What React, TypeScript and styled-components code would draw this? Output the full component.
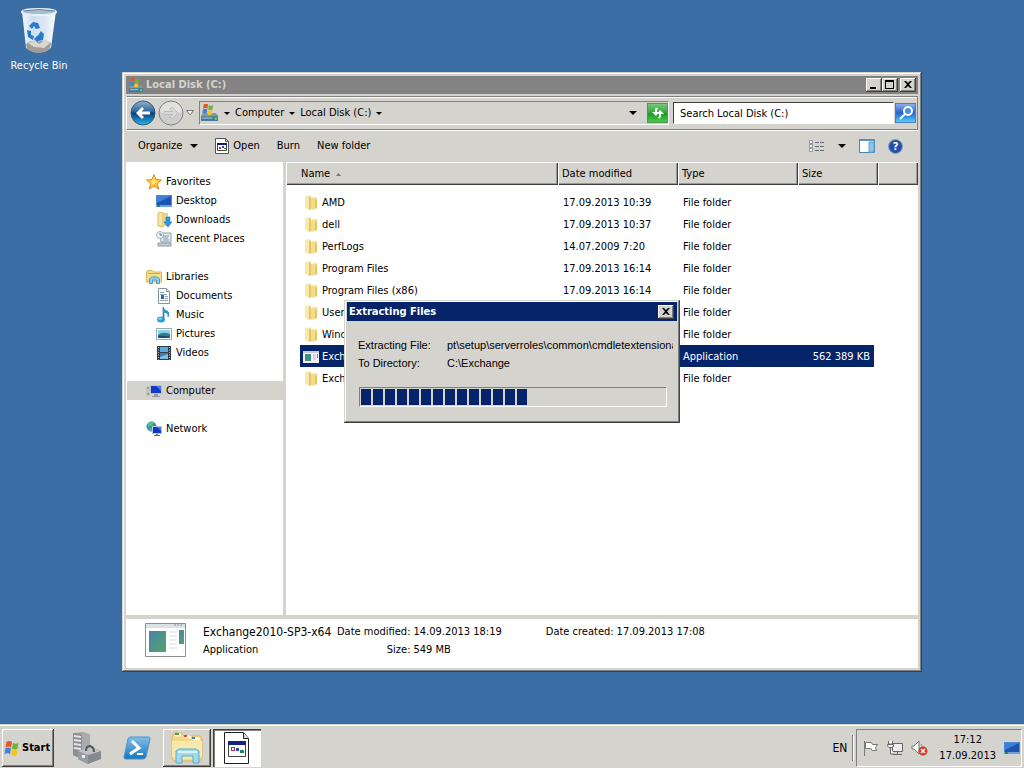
import { ReactNode } from "react";
import styled, { createGlobalStyle, css } from "styled-components";

const face = "#d5d3ce";
const navy = "#06246a";

type IconName =
  | "star"
  | "desktop"
  | "downloads"
  | "recent"
  | "libraries"
  | "document"
  | "music"
  | "pictures"
  | "videos"
  | "computer"
  | "network"
  | "folder"
  | "app";

const favorites: { label: string; icon: IconName }[] = [
  { label: "Desktop", icon: "desktop" },
  { label: "Downloads", icon: "downloads" },
  { label: "Recent Places", icon: "recent" },
];

const libraries: { label: string; icon: IconName }[] = [
  { label: "Documents", icon: "document" },
  { label: "Music", icon: "music" },
  { label: "Pictures", icon: "pictures" },
  { label: "Videos", icon: "videos" },
];

const files = [
  { name: "AMD", date: "17.09.2013 10:39", type: "File folder", size: "" },
  { name: "dell", date: "17.09.2013 10:37", type: "File folder", size: "" },
  { name: "PerfLogs", date: "14.07.2009 7:20", type: "File folder", size: "" },
  { name: "Program Files", date: "17.09.2013 16:14", type: "File folder", size: "" },
  { name: "Program Files (x86)", date: "17.09.2013 16:14", type: "File folder", size: "" },
  { name: "User", date: "", type: "File folder", size: "" },
  { name: "Wind", date: "", type: "File folder", size: "" },
  { name: "Exch", date: "", type: "Application", size: "562 389 KB", selected: true },
  { name: "Exch", date: "", type: "File folder", size: "" },
];

const PROGRESS_BLOCKS = 14;

const Flag = () => (
  <g>
    <path d="M2 2q3-2 6 0L7 8Q4 6 1 8z" fill="#e8572a" />
    <path d="M9 3q3 2 6 0l-1 6q-3 2-6 0z" fill="#72b52e" />
    <path d="M1 9q3-2 6 0l-1 6q-3-2-6 0z" fill="#3f84dc" />
    <path d="M8 10q3 2 6 0l-1 6q-3 2-6 0z" fill="#fcc419" />
  </g>
);

const DriveIcon = ({ size = 16 }: { size?: number }) => (
  <svg width={size} height={size} viewBox="0 0 16 16" aria-hidden="true">
    <path d="M1 10l2-2h11l2 2v5H1z" fill="#8299a0" />
    <path d="M1 11h15v4H1z" fill="#3d7899" />
    <path d="M2 12h9v1H2z" fill="#9cd1e2" />
    <path d="M13 12h2v2h-2z" fill="#72df3c" />
    <g transform="translate(2 -1) scale(.65)">
      <Flag />
    </g>
  </svg>
);

const SmallIcon = ({ name }: { name: IconName }) => {
  const shapes: Record<IconName, ReactNode> = {
    star: (
      <>
        <path
          d="M8 .5l2 5 5.500.5-4.200 3.500 1.400 5.500L8 12l-4.700 3 1.400-5.500L.5 6 6 5.500z"
          fill="#ffc936"
          stroke="#e08a1e"
        />
        <path d="M8 3l1 4h3l-3 2-4 2 1-3-3-1h3z" fill="#ffe680" />
      </>
    ),
    desktop: (
      <>
        <path d="M0 2h16v12H0z" fill="#4b8ad6" />
        <path d="M1 3h14v9H1z" fill="#1c54b0" />
        <path d="M1 3h14L1 10z" fill="#3f7ed6" />
        <path d="M0 12h16v2H0z" fill="#6ba4d9" />
        <path d="M1 12h3v2H1z" fill="#2d8a56" />
      </>
    ),
    downloads: (
      <>
        <path d="M2 1l5-1v15l-5-1z" fill="#f7e2a0" stroke="#dcbd6c" />
        <path d="M7 1h5v13H7z" fill="#ecd07c" />
        <path d="M10 5h4v5h2l-4 5-4-5h2z" fill="#2f9ae0" stroke="#1c72b8" strokeWidth=".6" />
      </>
    ),
    recent: (
      <>
        <path d="M4 2h11v9H5z" fill="#e5edf2" stroke="#8da0ac" />
        <path d="M7 5h6M7 7h5M7 9h6" stroke="#7d99ac" />
        <path d="M2 12h13v3H2z" fill="#c3cdd4" stroke="#8e9ba5" />
        <circle cx="4" cy="4" r="3.5" fill="#f4f6f8" stroke="#a5aeb5" />
        <path d="M4 2v2h2" fill="none" stroke="#4c6678" />
      </>
    ),
    libraries: (
      <>
        <path d="M.5 3l1-1.500h5L8 3h7.500v10H.5z" fill="#f6df8c" stroke="#d4b45c" />
        <path d="M2 4.500h12" stroke="#8cc46c" />
        <path d="M3.500 14.500V10l2-2h6l2 2v4.500h-3V11h-4v3.500z" fill="#8fd0ed" stroke="#4a9ac4" />
      </>
    ),
    document: (
      <>
        <path d="M2.500.5h8l3 3v12h-11z" fill="#fff" stroke="#8494a4" />
        <path d="M10.500.5v3h3" fill="#dfe6ee" stroke="#8494a4" />
        <path d="M4 4.500h4M4 6.500h7M9 8.500h3M9 10.500h3M4 12.500h8" stroke="#8aa8c8" />
        <path d="M5 7h3v4H5z" fill="#2d62ad" />
      </>
    ),
    music: (
      <>
        <path d="M7 12V0q1 3 4 4t1 6q1-4-4-5v7" fill="#2d95d5" stroke="#287cb5" strokeWidth=".7" />
        <ellipse cx="5" cy="12.500" rx="4" ry="3" fill="#2c9cdd" />
        <ellipse cx="4" cy="11.700" rx="2" ry="1" fill="#8cd3f7" />
      </>
    ),
    pictures: (
      <>
        <path d="M.5 2.500h15v11H.5z" fill="#fff" stroke="#9aa7b1" />
        <path d="M2 4h12v8H2z" fill="#85d4eb" />
        <path d="M2 9q4-4 12-1v4H2z" fill="#317d92" />
        <path d="M2 10q6-1 12 1v1H2z" fill="#1c4d74" />
      </>
    ),
    videos: (
      <>
        <path d="M1 1h14v14H1z" fill="#333c44" />
        <path d="M4 2h8v5H4z" fill="#5aabe0" />
        <path d="M4 8h8v6H4z" fill="#3c7dbb" />
        <path d="M2.500 2v13M13.500 2v13" stroke="#aeb8be" strokeDasharray="1 1.500" />
        <path d="M4 12l8-3v5H4z" fill="#80bce5" />
      </>
    ),
    computer: (
      <>
        <path d="M0 3h4v10H0z" fill="#c3c8bd" />
        <path d="M1 5h2M1 11h2" stroke="#64865c" />
        <path d="M4 2h12v9H4z" fill="#b7c0d5" />
        <path d="M5 3h10v7H5z" fill="#1239c4" />
        <path d="M10 3h5v5z" fill="#4977ec" />
        <path d="M8 11h4v2h2v1H6v-1h2z" fill="#9098a5" />
      </>
    ),
    network: (
      <>
        <circle cx="5.500" cy="5.500" r="5" fill="#2f91c5" />
        <path d="M2 2q5-3 6 0L5 5l-3 1zM3 7l3 1-1 3z" fill="#56c27b" />
        <path d="M6 5h10v8H6z" fill="#bcc6da" />
        <path d="M7 6h8v6H7z" fill="#1239c4" />
        <path d="M11 6h4v4z" fill="#4977ec" />
        <path d="M10 13h2v1h2v1H8v-1h2z" fill="#66708a" />
      </>
    ),
    folder: (
      <>
        <path d="M2 1l5-1 1 2v12l-2 1-4-2z" fill="#f8e9ab" />
        <path d="M6 2l2-1v13l-2 1z" fill="#e2c66c" />
        <path d="M8 3l4-1 2 1v10l-5 2-1-1z" fill="#f3dc8a" />
        <path d="M12 6l2-3v10l-2 1z" fill="#e3c568" />
      </>
    ),
    app: (
      <>
        <path d="M0 2h16v12H0z" fill="#f1f3f5" />
        <path d="M0 2h16v2H0z" fill="#c5ccd6" />
        <path d="M2 5h6v7H2z" fill="#438e83" />
        <path d="M10 6h3M10 8h3M10 10h3" stroke="#b9bdc2" />
        <path d="M14 5h1v4h-1z" fill="#4a8cbb" />
      </>
    ),
  };
  return (
    <svg width="16" height="16" viewBox="0 0 16 16" aria-hidden="true">
      {shapes[name]}
    </svg>
  );
};

const RecycleIcon = () => (
  <svg width="40" height="48" viewBox="0 0 40 48" aria-hidden="true">
    <defs>
      <linearGradient id="bin" x1="0" y1="0" x2="1" y2="0">
        <stop offset="0" stopColor="#f6fafd" />
        <stop offset=".3" stopColor="#cfdff0" />
        <stop offset=".7" stopColor="#dce7f3" />
        <stop offset="1" stopColor="#fff" />
      </linearGradient>
    </defs>
    <path d="M3 4l4 37q13 9 25 0l5-37z" fill="url(#bin)" />
    <path d="M7 37q5-5 11-2 8-3 14 1l-1 6q-12 8-23 0z" fill="#a09c99" />
    <path d="M9 36l7-3 4 4 6-4 5 3-6 5-10-1z" fill="#d9d5d0" />
    <ellipse cx="20" cy="5" rx="17" ry="3" fill="#a5bdd4" stroke="#e9f0f5" strokeWidth="2" />
    <path d="M4 4q16-3 32 0" fill="none" stroke="#697b8b" />
    <path d="M10 19l4-4 5 1 2 5-4 1-2-3-2 3zM8 23l4 1v4l3 1-1 4-5-3zM18 30l4-6 3 3-1 6-5 1v2l-4-4 4-4z" fill="#2978d0" />
  </svg>
);

const BackIcon = () => (
  <svg width="26" height="26" viewBox="0 0 26 26" aria-hidden="true">
    <defs>
      <linearGradient id="back" x1="0" y1="0" x2="0" y2="1">
        <stop offset="0" stopColor="#8fb4cf" />
        <stop offset=".45" stopColor="#2a6399" />
        <stop offset=".5" stopColor="#083e78" />
        <stop offset="1" stopColor="#25b8ee" />
      </linearGradient>
    </defs>
    <circle cx="13" cy="13" r="12" fill="url(#back)" stroke="#385b79" />
    <path d="M6 13l6-6 2 2-2.500 2.500H20v3h-8.500L14 17l-2 2z" fill="#fff" />
  </svg>
);

const ForwardIcon = () => (
  <svg width="26" height="26" viewBox="0 0 26 26" aria-hidden="true">
    <circle cx="13" cy="13" r="12" fill="#cdcdcc" stroke="#818181" />
    <path d="M2 12a11 10 0 0 1 22 0q-11 4-22 0z" fill="#e1e1e0" />
    <path d="M20 13l-6-6-2 2 2.500 2.500H6v3h8.500L12 17l2 2z" fill="#d9d9d9" stroke="#bdbdbd" />
  </svg>
);

const OpenIcon = () => (
  <svg width="14" height="16" viewBox="0 0 14 16" aria-hidden="true">
    <path d="M.5.5h10l3 3v12H.5z" fill="#fff" stroke="#555" />
    <path d="M10.500.5v3h3" fill="none" stroke="#555" />
    <path d="M2.500 5.500h9v7h-9z" fill="#fff" stroke="#444" />
    <path d="M2 5h10v2H2z" fill="#0a1c7c" />
    <path d="M4 9h2v2H4z" fill="#b83040" />
    <path d="M7 8h2v2H7z" fill="#2546b3" />
    <path d="M9 10h2v1H9z" fill="#298043" />
  </svg>
);

const Caret = ({ size = 8 }: { size?: number }) => (
  <svg width={size} height={size / 2} viewBox="0 0 8 4" aria-hidden="true">
    <path d="M0 0h8L4 4z" fill="#000" />
  </svg>
);

const CloseGlyph = () => (
  <svg width="8" height="7" viewBox="0 0 8 7" aria-hidden="true">
    <path d="M0 0h2l2 2 2-2h2L5 3.500 8 7H6L4 5 2 7H0l3-3.500z" fill="#000" />
  </svg>
);

const App = () => {
  return (
    <>
      <GlobalStyle />
      <Screen>
        <Desktop>
          <Shortcut type="button">
            <RecycleIcon />
            <span>Recycle Bin</span>
          </Shortcut>

          <ExplorerWindow aria-label="Local Disk (C:)">
            <TitleBar>
              <DriveIcon size={15} />
              <h1>Local Disk (C:)</h1>
              <CaptionButton type="button" aria-label="Minimize">
                <svg width="8" height="8" viewBox="0 0 8 8" aria-hidden="true">
                  <path d="M0 6h6v2H0z" />
                </svg>
              </CaptionButton>
              <CaptionButton type="button" aria-label="Maximize">
                <svg width="9" height="9" viewBox="0 0 9 9" aria-hidden="true">
                  <path d="M0 0h9v9H0zM1 2v6h7V2z" fillRule="evenodd" />
                </svg>
              </CaptionButton>
              <CaptionButton type="button" aria-label="Close" $last>
                <CloseGlyph />
              </CaptionButton>
            </TitleBar>

            <NavBar>
              <PlainButton type="button" aria-label="Back">
                <BackIcon />
              </PlainButton>
              <PlainButton type="button" aria-label="Forward">
                <ForwardIcon />
              </PlainButton>
              <HistoryButton type="button" aria-label="Recent pages">
                <svg width="8" height="6" viewBox="0 0 8 6" aria-hidden="true">
                  <path d="M.5.5h7L4 5z" fill="#f6f6f6" stroke="#777" />
                </svg>
              </HistoryButton>
              <AddressBar>
                <DriveIcon size={18} />
                <Crumbs>
                  <Caret size={6} />
                  <PlainButton type="button">Computer</PlainButton>
                  <Caret size={6} />
                  <PlainButton type="button">Local Disk (C:)</PlainButton>
                  <Caret size={6} />
                </Crumbs>
                <PlainButton type="button" aria-label="Previous locations">
                  <Caret />
                </PlainButton>
                <GlossButton type="button" aria-label="Refresh" $tone="green">
                  <svg width="16" height="14" viewBox="0 0 16 14" aria-hidden="true">
                    <path d="M8 2q-3-1-3 2v2H2l4 4 3-4H7V4z" fill="#fff" />
                    <path d="M8 12q3 1 3-2V8h3l-4-4-3 4h2v2z" fill="#fff" />
                  </svg>
                </GlossButton>
              </AddressBar>
              <SearchInput type="text" aria-label="Search" defaultValue="Search Local Disk (C:)" />
              <GlossButton type="button" aria-label="Search" $tone="blue">
                <svg width="16" height="16" viewBox="0 0 16 16" aria-hidden="true">
                  <circle cx="10" cy="6" r="4" fill="#4a8cec" stroke="#fff" strokeWidth="2" />
                  <path d="M7 9l-5 5" stroke="#fff" strokeWidth="2" />
                </svg>
              </GlossButton>
            </NavBar>

            <CommandBar>
              <Command type="button">
                Organize <Caret />
              </Command>
              <Command type="button" $icon>
                <OpenIcon /> Open
              </Command>
              <Command type="button">Burn</Command>
              <Command type="button">New folder</Command>
              <CommandTools>
                <PlainButton type="button" aria-label="Change your view">
                  <svg width="16" height="13" viewBox="0 0 16 13" aria-hidden="true">
                    <path d="M.5.5h3v3h-3zM.5 4.500h3v3h-3zM.5 8.500h3v3h-3z" fill="#fff" stroke="#8793a5" />
                    <path d="M6 2.500h4M11 2.500h4M6 6.500h4M11 6.500h4M6 10.500h4M11 10.500h4" stroke="#666e7b" />
                  </svg>
                </PlainButton>
                <PlainButton type="button" aria-label="More view options">
                  <Caret />
                </PlainButton>
                <PlainButton type="button" aria-label="Show the preview pane">
                  <svg width="16" height="14" viewBox="0 0 16 14" aria-hidden="true">
                    <path d="M.5.5h15v13H.5z" fill="#fff" stroke="#4781b5" />
                    <path d="M0 0h16v2H0z" fill="#5590c0" />
                    <path d="M10 3h5v10h-5z" fill="#8cc7e8" stroke="#639fc9" />
                  </svg>
                </PlainButton>
                <PlainButton type="button" aria-label="Help">
                  <HelpBadge>?</HelpBadge>
                </PlainButton>
              </CommandTools>
            </CommandBar>

            <Panes>
              <Sidebar aria-label="Folders">
                <TreeGroup>
                  <TreeItem href="#favorites">
                    <SmallIcon name="star" />
                    Favorites
                  </TreeItem>
                  {favorites.map((item) => (
                    <TreeItem key={item.label} href={`#${item.icon}`} $nested>
                      <SmallIcon name={item.icon} />
                      {item.label}
                    </TreeItem>
                  ))}
                </TreeGroup>
                <TreeGroup>
                  <TreeItem href="#libraries">
                    <SmallIcon name="libraries" />
                    Libraries
                  </TreeItem>
                  {libraries.map((item) => (
                    <TreeItem key={item.label} href={`#${item.icon}`} $nested>
                      <SmallIcon name={item.icon} />
                      {item.label}
                    </TreeItem>
                  ))}
                </TreeGroup>
                <TreeGroup>
                  <TreeItem href="#computer" $active>
                    <SmallIcon name="computer" />
                    Computer
                  </TreeItem>
                </TreeGroup>
                <TreeGroup>
                  <TreeItem href="#network">
                    <SmallIcon name="network" />
                    Network
                  </TreeItem>
                </TreeGroup>
              </Sidebar>

              <FileArea>
                <FileTable>
                  <colgroup>
                    <col />
                    <col width="120" />
                    <col width="120" />
                    <col width="80" />
                    <col width="40" />
                  </colgroup>
                  <thead>
                    <tr>
                      <HeadCell $first>
                        Name
                        <svg width="5" height="3" viewBox="0 0 5 3" aria-hidden="true">
                          <path d="M0 3l2.500-3L5 3z" fill="#777" />
                        </svg>
                      </HeadCell>
                      <HeadCell>Date modified</HeadCell>
                      <HeadCell>Type</HeadCell>
                      <HeadCell>Size</HeadCell>
                      <HeadCell aria-label="More" />
                    </tr>
                  </thead>
                  <tbody>
                    {files.map((file, index) => (
                      <FileRow key={index} $selected={file.selected}>
                        <td>
                          <NameCell>
                            <SmallIcon name={file.selected ? "app" : "folder"} />
                            {file.name}
                          </NameCell>
                        </td>
                        <td>
                          <Cell>{file.date}</Cell>
                        </td>
                        <td>
                          <Cell>{file.type}</Cell>
                        </td>
                        <td>
                          <Cell $right>{file.size}</Cell>
                        </td>
                        <td />
                      </FileRow>
                    ))}
                  </tbody>
                </FileTable>
              </FileArea>
            </Panes>

            <Details>
              <svg width="42" height="34" viewBox="0 0 42 34" aria-hidden="true">
                <defs>
                  <linearGradient id="preview" x1="0" y1="0" x2="1" y2="1">
                    <stop offset="0" stopColor="#4a83ad" />
                    <stop offset="1" stopColor="#55a368" />
                  </linearGradient>
                </defs>
                <path d="M.5.5h40v33H.5z" fill="#fff" stroke="#8b9098" />
                <path d="M1 1h39v4H1z" fill="#dce1e8" />
                <path d="M29 2h9" stroke="#8792a0" strokeDasharray="2 1" />
                <path d="M4 8h17v21H4z" fill="url(#preview)" />
                <path d="M24 9h8M24 13h8M24 17h8M24 21h8M24 25h8" stroke="#d6d9dd" />
                <path d="M34 7h5v14h-5z" fill="url(#preview)" />
              </svg>
              <DetailColumn>
                <strong>Exchange2010-SP3-x64</strong>
                <span>Application</span>
              </DetailColumn>
              <DetailList>
                <dt>Date modified:</dt>
                <dd>14.09.2013 18:19</dd>
                <dt>Size:</dt>
                <dd>549 MB</dd>
              </DetailList>
              <DetailList>
                <dt>Date created:</dt>
                <dd>17.09.2013 17:08</dd>
              </DetailList>
            </Details>
          </ExplorerWindow>

          <Dialog role="dialog" aria-labelledby="extract-title">
            <DialogTitle>
              <h2 id="extract-title">Extracting Files</h2>
              <CaptionButton type="button" aria-label="Close dialog">
                <CloseGlyph />
              </CaptionButton>
            </DialogTitle>
            <DialogBody>
              <ExtractInfo>
                <dt>Extracting File:</dt>
                <dd>pt\setup\serverroles\common\cmdletextensiona</dd>
                <dt>To Directory:</dt>
                <dd>C:\Exchange</dd>
              </ExtractInfo>
              <Progress role="progressbar" aria-label="Extraction" aria-valuenow={55}>
                {Array.from({ length: PROGRESS_BLOCKS }, (_, i) => (
                  <Block key={i} />
                ))}
              </Progress>
            </DialogBody>
          </Dialog>
        </Desktop>

        <Taskbar>
          <StartButton type="button">
            <svg width="16" height="16" viewBox="0 0 16 17" aria-hidden="true">
              <Flag />
            </svg>
            Start
          </StartButton>
          <TaskButton type="button" aria-label="Server Manager">
            <svg width="30" height="34" viewBox="0 0 30 34" aria-hidden="true">
              <path d="M1 2l10-1 7 2v21l-8 4-9-4z" fill="#a6a9ab" />
              <path d="M1 2l9 1v25l-9-4z" fill="#8b8f93" />
              <path d="M2 5l7 1M2 9l7 1M2 13l7 1M2 17l7 1" stroke="#e4e6e7" strokeWidth="2" />
              <path d="M10 3l8 0v21l-8 4z" fill="#a9abad" />
              <path d="M6 20l14-4 9 4v8l-13 5-10-5z" fill="#858a90" />
              <path d="M6 20l10 4v9L6 28z" fill="#989da2" />
              <path d="M6 20l14-4 9 4-13 4z" fill="#c0c3c6" />
              <path d="M14 20q0-5 4-5 4 1 4 6" fill="none" stroke="#555" strokeWidth="2" />
              <path d="M10 24h3v3h-3z" fill="#eee" />
            </svg>
          </TaskButton>
          <TaskButton type="button" aria-label="Windows PowerShell">
            <svg width="28" height="24" viewBox="0 0 28 24" aria-hidden="true">
              <defs>
                <linearGradient id="shell" x1="0" y1="0" x2="0" y2="1">
                  <stop offset="0" stopColor="#83bfe8" />
                  <stop offset="1" stopColor="#1876bd" />
                </linearGradient>
              </defs>
              <path d="M7 1h19q1 0 1 2l-4 18q-1 2-3 2H2q-1 0-1-2L5 3q1-2 2-2z" fill="url(#shell)" stroke="#4a94c8" />
              <path d="M9 5l7 7-9 6" fill="none" stroke="#fff" strokeWidth="3" />
              <path d="M14 18h6" stroke="#fff" strokeWidth="2" />
            </svg>
          </TaskButton>
          <TaskButton type="button" aria-label="Windows Explorer" $state="raised">
            <svg width="34" height="32" viewBox="0 0 34 32" aria-hidden="true">
              <path d="M2 5l2-4h8l2 3h16l2 3v20l-3 2H4l-2-2z" fill="#f3d987" stroke="#d8b765" />
              <path d="M5 3h6M15 5h6M23 7h7" stroke="#fff7d4" strokeWidth="3" />
              <path d="M5 2h4" stroke="#46a648" strokeWidth="2" />
              <path d="M14 4h3" stroke="#d34838" strokeWidth="2" />
              <path d="M22 6h3" stroke="#3a83c5" strokeWidth="2" />
              <path d="M2 9h30v16q-15 5-30 0z" fill="#f9e8ad" />
              <path d="M6 31V19l3-2h17l3 2v12h-6v-7H12v7z" fill="#a0d9ec" stroke="#5aadce" />
              <path d="M8 20h19" stroke="#d8f3fb" strokeWidth="2" />
            </svg>
          </TaskButton>
          <TaskButton type="button" aria-label="Extracting Files" $state="pressed">
            <svg width="26" height="32" viewBox="0 0 26 32" aria-hidden="true">
              <path d="M.5.5h19l5 6v25H.5z" fill="#fff" stroke="#222" />
              <path d="M19.500.5v6h5" fill="#ddd" stroke="#222" />
              <path d="M4.500 9.500h17v15h-17z" fill="#fff" stroke="#444" />
              <path d="M4 9h18v4H4z" fill="#18227c" />
              <path d="M7 15h4v4H7z" fill="#b52945" />
              <path d="M12 16h3v3h-3z" fill="#2c48ba" />
              <path d="M16 18h4v3h-4z" fill="#238250" />
              <path d="M8 16h2v2H8z" fill="#fff" />
            </svg>
          </TaskButton>
          <Language type="button">EN</Language>
          <Tray>
            <svg width="16" height="16" viewBox="0 0 16 16" aria-hidden="true">
              <path d="M1.500 1v15" stroke="#777" />
              <path d="M2.500 2.500h6l1 2h5l-2 3 1 3H9l-1-2H2.500z" fill="#fff" stroke="#777" />
            </svg>
            <svg width="16" height="16" viewBox="0 0 16 16" aria-hidden="true">
              <path d="M5.500 3.500h10v8h-10z" fill="#eee" stroke="#666" />
              <path d="M10.500 12v2M6 14.500h9" stroke="#666" />
              <path d="M1.500 1v3h4V1M.5 4.500h6v2l-2 1H2l-1-1zM3.500 8v6H7" fill="#fff" stroke="#666" />
            </svg>
            <svg width="17" height="16" viewBox="0 0 17 16" aria-hidden="true">
              <path d="M1 6h2l5-5v13l-5-5H1z" fill="#fff" stroke="#777" />
              <path d="M10 4q2 2 1 5" fill="none" stroke="#888" />
              <circle cx="12" cy="11" r="4.500" fill="#d43a28" />
              <path d="M10 9l4 4M14 9l-4 4" stroke="#fff" strokeWidth="1.500" />
            </svg>
            <Clock>
              <span>17:12</span>
              <span>17.09.2013</span>
            </Clock>
            <PlainButton type="button" aria-label="Show desktop">
              <SmallIcon name="desktop" />
            </PlainButton>
          </Tray>
        </Taskbar>
      </Screen>
    </>
  );
};

export default App;

const GlobalStyle = createGlobalStyle`
  * {
    box-sizing: border-box;
  }

  body {
    margin: 0;
    color: #000;
    font: 11px/14px "DejaVu Sans Condensed", "DejaVu Sans", sans-serif;
  }

  button, input {
    color: inherit;
    font: inherit;
  }

  h1, h2, dl, dd {
    margin: 0;
    font-size: 11px;
  }

  svg {
    display: block;
    flex-shrink: 0;
  }
`;

const raised = css`
  box-shadow: inset -1px -1px #404040, inset 1px 1px #fff, inset -2px -2px #808080;
`;

const sunken = css`
  border: 1px solid;
  border-color: #808080 #fff #fff #808080;
`;

const Screen = styled.div`
  display: flex;
  flex-direction: column;
  min-height: 100vh;
`;

const Desktop = styled.main`
  position: relative;
  flex: 1;
  padding: 7px;
  background: #3a6ea5;
`;

const PlainButton = styled.button`
  display: flex;
  align-items: center;
  padding: 0;
  border: 0;
  background: none;
  white-space: nowrap;
`;

const Shortcut = styled(PlainButton)`
  flex-direction: column;
  gap: 4px;
  width: 64px;
  color: #fff;
`;

const ExplorerWindow = styled.section`
  position: absolute;
  inset: 72px 102px 52px 122px;
  display: flex;
  flex-direction: column;
  padding: 4px;
  background: ${face};
  box-shadow: inset -1px -1px #404040, inset 1px 1px ${face}, inset -2px -2px #808080,
    inset 2px 2px #fff;
`;

const TitleBar = styled.header`
  display: flex;
  align-items: center;
  height: 18px;
  padding: 0 2px;
  background: #838383;
  color: ${face};

  h1 {
    flex: 1;
    margin-left: 3px;
  }
`;

const CaptionButton = styled.button<{ $last?: boolean }>`
  display: flex;
  align-items: center;
  justify-content: center;
  width: 16px;
  height: 14px;
  margin-left: ${({ $last }) => ($last ? 2 : 0)}px;
  padding: 0 1px 1px 0;
  border: 0;
  background: ${face};
  ${raised}
`;

const NavBar = styled.div`
  display: flex;
  align-items: center;
  height: 34px;
  margin-top: 2px;
  padding: 0 1px 0 3px;
  border: 1px solid;
  border-color: #808080 #808080 #808080 #fff;
  box-shadow: inset 0 1px #fff, 0 1px #fff;

  > button + button {
    margin-left: 2px;
  }
`;

const HistoryButton = styled(PlainButton)`
  padding: 0 5px 0 0;
`;

const AddressBar = styled.div`
  display: flex;
  flex: 1;
  align-items: center;
  height: 24px;
  ${sunken}
`;

const Crumbs = styled.div`
  display: flex;
  flex: 1;
  align-items: center;
  gap: 5px;
  padding-left: 6px;
`;

const GlossButton = styled.button<{ $tone: "green" | "blue" }>`
  display: flex;
  align-items: center;
  justify-content: center;
  width: 21px;
  height: 20px;
  padding: 0;
  border: 1px solid ${({ $tone }) => ($tone === "green" ? "#4b9a4b" : "#4c7fc2")};
  background: ${({ $tone }) =>
    $tone === "green"
      ? "linear-gradient(#78c878, #2fa236 50%, #189a1c 52%, #4bc94b)"
      : "linear-gradient(#8aaeec, #2b60cf 50%, #2268d2 52%, #52d0f8)"};

  ${AddressBar} & {
    margin-left: 10px;
  }
`;

const SearchInput = styled.input`
  width: 221px;
  height: 22px;
  margin: 0 1px 0 4px;
  padding: 0 6px;
  border: 1px solid;
  border-color: #404040 #fff #fff #404040;
  background: #fff;
  outline: 0;
`;

const CommandBar = styled.div`
  display: flex;
  align-items: center;
  gap: 17px;
  height: 32px;
  padding: 0 15px 0 12px;
`;

const Command = styled(PlainButton)<{ $icon?: boolean }>`
  gap: ${({ $icon }) => ($icon ? 4 : 8)}px;
`;

const CommandTools = styled.div`
  display: flex;
  flex: 1;
  align-items: center;
  justify-content: flex-end;
  gap: 13px;
`;

const HelpBadge = styled.span`
  width: 15px;
  height: 15px;
  border: 1px solid #8fa5cc;
  border-radius: 50%;
  background: #2450a8;
  color: #fff;
  font-weight: bold;
  line-height: 13px;
`;

const Panes = styled.div`
  display: flex;
  flex: 1;
  min-height: 0;
`;

const Sidebar = styled.nav`
  flex: 0 0 160px;
  padding-top: 10px;
  border-right: 3px solid ${face};
  background: #fff;
`;

const TreeGroup = styled.div`
  margin-bottom: 19px;
`;

const TreeItem = styled.a<{ $nested?: boolean; $active?: boolean }>`
  display: flex;
  align-items: center;
  gap: 4px;
  height: 19px;
  margin-left: 1px;
  padding-left: ${({ $nested }) => ($nested ? 29 : 19)}px;
  background: ${({ $active }) => ($active ? face : "none")};
  color: inherit;
  text-decoration: none;
`;

const FileArea = styled.div`
  flex: 1;
  min-width: 0;
  background: #fff;
`;

const FileTable = styled.table`
  width: 100%;
  border-spacing: 0;
  table-layout: fixed;

  thead::after {
    content: "";
    display: block;
    height: 6px;
  }

  td {
    padding: 0;
  }

  td:first-child {
    padding-left: 14px;
  }
`;

const HeadCell = styled.th<{ $first?: boolean }>`
  height: 23px;
  padding: 1px 0 0 ${({ $first }) => ($first ? 15 : 4)}px;
  background: ${face};
  box-shadow: inset 1px 1px #fff, inset -1px -1px #404040, inset -2px -2px #999;
  font-weight: normal;
  text-align: left;

  svg {
    display: inline-block;
    margin-left: 6px;
    vertical-align: middle;
  }
`;

const Cell = styled.div<{ $right?: boolean }>`
  height: 22px;
  margin-right: ${({ $right }) => ($right ? 4 : 0)}px;
  padding: 1px 4px 0 5px;
  line-height: 22px;
  text-align: ${({ $right }) => ($right ? "right" : "left")};
  white-space: nowrap;
`;

const NameCell = styled(Cell)`
  display: flex;
  align-items: center;
  gap: 3px;
  padding-left: 3px;
`;

const FileRow = styled.tr<{ $selected?: boolean }>`
  ${Cell} {
    background: ${({ $selected }) => ($selected ? navy : "none")};
    color: ${({ $selected }) => ($selected ? "#fff" : "inherit")};
  }
`;

const Details = styled.footer`
  display: flex;
  align-items: flex-start;
  height: 53px;
  padding: 4px 19px;
  border-top: 4px solid ${face};
  background: #fff;
`;

const DetailColumn = styled.div`
  display: grid;
  grid-auto-rows: 18px;
  align-items: center;
  width: 130px;
  margin-left: 16px;
  white-space: nowrap;

  strong {
    font-size: 12px;
    font-weight: normal;
  }
`;

const DetailList = styled.dl`
  display: grid;
  grid-template-columns: auto auto;
  grid-auto-rows: 18px;
  align-items: center;
  column-gap: 3px;
  margin: 0 40px 0 4px;
  white-space: nowrap;

  dt {
    text-align: right;
  }
`;

const Dialog = styled.section`
  position: absolute;
  top: 300px;
  left: 344px;
  width: 336px;
  padding: 2px;
  background: ${face};
  box-shadow: inset -1px -1px #404040, inset 1px 1px ${face}, inset -2px -2px #808080,
    inset 2px 2px #fff;
`;

const DialogTitle = styled.header`
  display: flex;
  align-items: center;
  height: 19px;
  margin: 0 1px;
  padding: 0 3px 0 2px;
  background: ${navy};
  color: #fff;

  h2 {
    flex: 1;
  }
`;

const DialogBody = styled.div`
  padding: 15px 11px 14px 12px;
`;

const ExtractInfo = styled.dl`
  display: grid;
  grid-template-columns: 89px 1fr;
  grid-auto-rows: 18px;
  align-items: center;
  margin-right: -6px;
  font-family: "Liberation Sans", Arial, sans-serif;

  dd {
    overflow: hidden;
    white-space: nowrap;
  }
`;

const Progress = styled.div`
  display: flex;
  gap: 2px;
  height: 20px;
  margin-top: 15px;
  margin-left: 1px;
  padding: 1px;
  ${sunken}
`;

const Block = styled.span`
  width: 10px;
  background: ${navy};
`;

const Taskbar = styled.footer`
  display: flex;
  align-items: center;
  height: 44px;
  padding: 3px 2px 1px;
  border-top: 1px solid ${face};
  background: ${face};
  box-shadow: inset 0 1px #fff;
`;

const StartButton = styled.button`
  display: flex;
  align-items: center;
  gap: 2px;
  width: 52px;
  height: 38px;
  margin-right: 9px;
  padding: 0 2px;
  border: 0;
  background: ${face};
  font-weight: bold;
  ${raised}
`;

const TaskButton = styled.button<{ $state?: "raised" | "pressed" }>`
  display: flex;
  align-items: center;
  justify-content: center;
  width: 48px;
  height: 38px;
  margin-right: 2px;
  padding: 0;
  border: 0;
  background: ${({ $state }) => ($state === "pressed" ? "#fff" : face)};
  ${({ $state }) => $state === "raised" && raised}
  ${({ $state }) => $state === "pressed" && "box-shadow: inset 1px 1px #404040, inset 2px 2px #808080;"}
`;

const Language = styled(PlainButton)`
  height: 26px;
  margin-left: auto;
  padding-right: 5px;
  border-right: 1px solid #808080;
  box-shadow: 1px 0 #fff;
  font-size: 12px;
`;

const Tray = styled.div`
  display: flex;
  align-items: center;
  gap: 8px;
  height: 38px;
  margin-left: 3px;
  padding: 0 1px 0 6px;
  ${sunken}
`;

const Clock = styled.time`
  display: flex;
  flex-direction: column;
  align-items: center;
  margin: 0 0 0 3px;
  line-height: 16px;
`;
